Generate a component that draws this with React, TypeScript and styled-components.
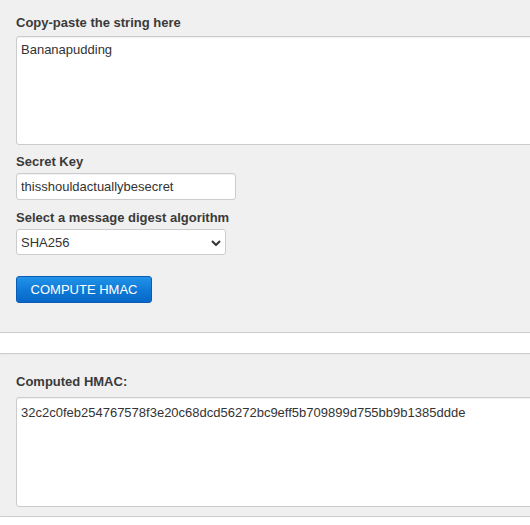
import React from "react";
import styled, { createGlobalStyle } from "styled-components";

const Global = createGlobalStyle`
  html, body { margin: 0; padding: 0; background: #ffffff; overflow: hidden; }
  body { font-family: "Liberation Sans", Arial, sans-serif; font-size: 13px; color: #333; }
`;

const Page = styled.div`
  width: 900px;
  margin-left: -3px;
  display: flex;
  flex-direction: column;
  gap: 20px;
`;

const Panel = styled.section<{ $top: number; $bottom: number; $first?: boolean }>`
  background: #f0f0f0;
  border: 1px solid #cccccc;
  border-top-width: ${(p) => (p.$first ? 0 : 1)}px;
  border-radius: ${(p) => (p.$first ? "0 0 4px 4px" : "4px")};
  box-shadow: ${(p) => (p.$first ? "none" : "inset 0 4px 3px -3px rgba(0,0,0,0.04)")};
  padding: ${(p) => p.$top}px 16px ${(p) => p.$bottom}px 18px;
  display: flex;
  flex-direction: column;
  align-items: flex-start;
`;

const Label = styled.label<{ $gap: number; $space?: number }>`
  display: block;
  font-weight: bold;
  font-size: 13px;
  line-height: 18px;
  color: #3a3a3a;
  margin-top: ${(p) => p.$space ?? 0}px;
  margin-bottom: ${(p) => p.$gap}px;
`;

const TextArea = styled.textarea<{ $h: number; $pt: number }>`
  box-sizing: border-box;
  width: 700px;
  height: ${(p) => p.$h}px;
  border: 1px solid #cccccc;
  border-radius: 3px;
  background: #ffffff;
  box-shadow: inset 0 1px 1px rgba(0, 0, 0, 0.06);
  padding: ${(p) => p.$pt}px 4px 4px 4px;
  font-family: "Liberation Sans", Arial, sans-serif;
  font-size: 13px;
  line-height: 15px;
  color: #333;
  resize: none;
  outline: none;
  margin: 0;
`;

const TextInput = styled.input`
  box-sizing: border-box;
  width: 220px;
  height: 27px;
  border: 1px solid #cccccc;
  border-radius: 3px;
  background: #ffffff;
  box-shadow: inset 0 1px 1px rgba(0, 0, 0, 0.05);
  padding: 0 4px;
  font-family: "Liberation Sans", Arial, sans-serif;
  font-size: 13px;
  color: #333;
  outline: none;
  margin: 0;
`;

const SelectWrap = styled.div`
  position: relative;
  width: 210px;
  height: 26px;
`;

const Select = styled.select`
  appearance: none;
  -webkit-appearance: none;
  box-sizing: border-box;
  width: 210px;
  height: 26px;
  border: 1px solid #cccccc;
  border-radius: 3px;
  background: #ffffff;
  padding: 0 20px 0 4px;
  font-family: "Liberation Sans", Arial, sans-serif;
  font-size: 13px;
  color: #333;
  outline: none;
  margin: 0;
`;

const Chevron = styled.svg`
  position: absolute;
  right: 5px;
  top: 11px;
  pointer-events: none;
`;

const Button = styled.button`
  margin-top: 21px;
  box-sizing: border-box;
  width: 136px;
  height: 27px;
  padding: 0;
  border: 1px solid #0a5cb4;
  border-radius: 3px;
  background: linear-gradient(to bottom, #2193e8 0%, #0f78d6 55%, #0767c6 100%);
  color: #ffffff;
  font-family: "Liberation Sans", Arial, sans-serif;
  font-size: 13px;
  line-height: 25px;
  text-align: center;
  cursor: pointer;
`;

export default function App() {
  return (
    <>
      <Global />
      <Page>
        <Panel $first $top={14} $bottom={29}>
          <Label $gap={4}>Copy-paste the string here</Label>
          <TextArea $h={109} $pt={5} defaultValue="Bananapudding" />
          <Label $gap={2} $space={8}>Secret Key</Label>
          <TextInput defaultValue="thisshouldactuallybesecret" />
          <Label $gap={2} $space={9}>Select a message digest algorithm</Label>
          <SelectWrap>
            <Select defaultValue="SHA256">
              <option>MD5</option>
              <option>SHA1</option>
              <option>SHA256</option>
              <option>SHA512</option>
            </Select>
            <Chevron width="10" height="6" viewBox="0 0 10 6">
              <path d="M1 1 L5 5 L9 1" fill="none" stroke="#333" strokeWidth="2" />
            </Chevron>
          </SelectWrap>
          <Button>COMPUTE HMAC</Button>
        </Panel>
        <Panel $top={19} $bottom={9}>
          <Label $gap={6}>Computed HMAC:</Label>
          <TextArea
            $h={110}
            $pt={7}
            defaultValue="32c2c0feb254767578f3e20c68dcd56272bc9eff5b709899d755bb9b1385ddde"
          />
        </Panel>
      </Page>
    </>
  );
}
